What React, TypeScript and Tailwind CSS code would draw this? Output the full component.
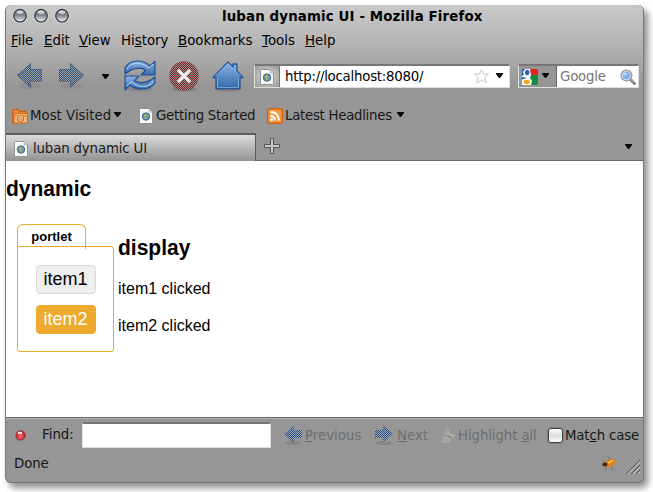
import React from "react";

const Caret = ({ className = "" }: { className?: string }) => (
  <svg className={"shrink-0 " + className} width="7" height="5" viewBox="0 0 7 5">
    <path d="M0 0H7V1L4 5H3L0 1Z" fill="#080808" />
  </svg>
);

const Orb = () => (
  <svg width="16" height="16" viewBox="0 0 16 16">
    <circle cx="8" cy="8" r="7.6" fill="#e2e2e2" />
    <circle cx="8" cy="7.8" r="6.3" fill="url(#orb)" stroke="#35383f" strokeWidth="1.3" />
    <ellipse cx="8" cy="4" rx="3.4" ry="1.8" fill="#fff" opacity=".65" />
  </svg>
);

const Defs = () => (
  <svg className="absolute" width="0" height="0">
    <defs>
      <linearGradient id="orb" x1="0" y1="0" x2="0" y2="1">
        <stop offset="0" stopColor="#777c85" />
        <stop offset=".45" stopColor="#7d838d" />
        <stop offset="1" stopColor="#f4f8fc" />
      </linearGradient>
      <linearGradient id="blue" x1="0" y1="0" x2="0" y2="1">
        <stop offset="0" stopColor="#8db4e2" />
        <stop offset="1" stopColor="#3269ae" />
      </linearGradient>
      <radialGradient id="red" cx=".5" cy=".6" r=".5">
        <stop offset="0" stopColor="#ff7777" />
        <stop offset="1" stopColor="#bd1621" />
      </radialGradient>
      <pattern id="dimBlue" width="2" height="2" patternUnits="userSpaceOnUse">
        <path d="M1 0h1v1H1zM0 1h1v1H0z" fill="#35547c" />
      </pattern>
      <pattern id="dimRed" width="2" height="2" patternUnits="userSpaceOnUse">
        <rect width="2" height="2" fill="#989090" />
        <path d="M0 0h1v1H0zM1 1h1v1H1z" fill="#7b2020" />
      </pattern>
      <pattern id="findBlue" width="2" height="2" patternUnits="userSpaceOnUse">
        <rect width="2" height="2" fill="#9aa5b4" />
        <path d="M0 0h1v1H0zM1 1h1v1H1z" fill="#2c4f7e" />
      </pattern>
    </defs>
  </svg>
);

const Arrow = ({ right = false }: { right?: boolean }) => (
  <svg width="27" height="28" viewBox="0 0 27 28">
    <ellipse cx="14" cy="24" rx="11" ry="3" fill="#777" opacity=".25" />
    <path
      d={right ? "M1 7H12V1L26 13L12 26V19H1Z" : "M26 7H15V1L1 13L15 26V19H26Z"}
      fill="url(#dimBlue)"
    />
    <path
      d={right ? "M1.500 7.500H12.500V2L25.500 13.500L12.500 25V19.500H1.500Z" : "M25.500 7.500H14.500V2L1.500 13.500L14.500 25V19.500H25.500Z"}
      fill="none" stroke="#33486a" strokeWidth="1" strokeDasharray="1 1"
    />
  </svg>
);

const SmallArrow = ({ right = false }: { right?: boolean }) => (
  <svg width="20" height="22" viewBox="0 0 20 22">
    <ellipse cx="10" cy="19" rx="8" ry="2" fill="#6e6e6e" opacity=".35" />
    <path
      d={right ? "M1 6H9V1L19 10L9 19V14H1Z" : "M19 6H11V1L1 10L11 19V14H19Z"}
      fill="url(#findBlue)"
    />
  </svg>
);

const Reload = () => (
  <svg width="32" height="32" viewBox="0 0 32 32">
    <ellipse cx="16" cy="29" rx="13" ry="2.5" fill="#555" opacity=".25" />
    <g fill="url(#blue)" stroke="#204f90" strokeWidth="1.2" strokeLinejoin="round">
      <path d="M1 14V8C4 3 8 1 13 1C19 1 23 3 26 6L31 1.500V15H17L21.500 10.500C18 7 9 7 1 14Z" />
      <path d="M31 17V23C28 27 24 29 19 29C13 29 9 28 6 25L1 30V16H15L10.500 20.500C14 24 23 24 31 17Z" />
    </g>
    <path d="M3 9C8 2 16 1 25 8L29 4M29 22C24 28 15 28 7 22L3 26" fill="none" stroke="#bad4f1" strokeWidth="1" />
    <path d="M8 6C6 8 6 9 7 10M24 20Q24 23 23 25" fill="none" stroke="#3e70b0" />
  </svg>
);

const Stop = () => (
  <svg width="30" height="32" viewBox="0 0 30 32">
    <ellipse cx="15" cy="29" rx="12" ry="2.500" fill="#555" opacity=".35" />
    <circle cx="15" cy="16" r="14.800" fill="url(#dimRed)" />
    <path d="M10 11L20 21M20 11L10 21" stroke="#eee" strokeWidth="3.200" strokeLinecap="square" />
  </svg>
);

const Home = () => (
  <svg width="32" height="31" viewBox="0 0 32 31">
    <ellipse cx="16" cy="28" rx="13" ry="2.500" fill="#555" opacity=".4" />
    <path d="M16 1L21 6V3H25V10L31 16.500H28V27.500H4V16.500H1Z" fill="url(#blue)" stroke="#245495" strokeWidth="1.300" strokeLinejoin="round" />
    <path d="M3.500 15L16 2.500L28.500 15M5.500 17V26.500H26.500V17" fill="none" stroke="#a2c4e8" opacity=".6" />
  </svg>
);

const Page = () => (
  <svg width="14" height="16" viewBox="0 0 14 16">
    <path d="M.5 1.500Q.5.500 1.500.500H10L13.500 4V14.500Q13.500 15.500 12.500 15.500H1.500Q.5 15.500.5 14.500Z" fill="#f8f8f6" stroke="#929292" />
    <path d="M10 1V4H13" fill="#d8d8d8" stroke="#aaa" strokeWidth=".6" />
    <circle cx="7" cy="8.500" r="3.700" fill="#5d90c0" stroke="#3f628e" />
    <path d="M4.500 7L7 5.500L8.500 6.500L7 8.500L8 10.500L6.500 11.500L5.500 9ZM8.500 7L10 8.500L9 10Z" fill="#a4b956" />
  </svg>
);

const PhotoFolder = () => (
  <svg width="16" height="16" viewBox="0 0 16 16">
    <path d="M.7 14.500V1.500H6L7 3.500H14.500V14.500Z" fill="#e98c43" stroke="#cc641a" strokeWidth="1.300" />
    <path d="M2 5.500H15.300V15H2Z" fill="#f5b97a" stroke="#cf671d" />
    <circle cx="8.500" cy="10.500" r="3" fill="#ffe0b8" stroke="#c86c29" strokeWidth="1.200" />
    <circle cx="8.500" cy="10.500" r="1.200" fill="none" stroke="#c86c29" />
    <path d="M3 7.500H5M11 7L13 8.500L14 8" stroke="#c86c29" fill="none" />
  </svg>
);

const Feed = () => (
  <svg width="16" height="16" viewBox="0 0 16 16">
    <rect x=".7" y=".7" width="14.600" height="14.600" rx="1.500" fill="#f39a3f" stroke="#d26013" strokeWidth="1.400" />
    <path d="M3.500 4Q11.500 4 12 12.500M3.500 8Q8 8 8 12.500" fill="none" stroke="#fff" strokeWidth="1.800" />
    <circle cx="4.500" cy="11.500" r="1.500" fill="#fff" />
  </svg>
);

const Google = () => (
  <svg width="16" height="16" viewBox="0 0 16 16">
    <rect width="16" height="16" rx="1" fill="#fff" />
    <path d="M8 0H15Q16 0 16 1V6H9Z" fill="#e42520" />
    <path d="M9 6H16V15Q16 16 15 16H9L10 12L8 9Z" fill="#168c40" />
    <path d="M0 0H3L1 3L2 6L0 7Z" fill="#2463b1" />
    <ellipse cx="5.200" cy="3.500" rx="2.200" ry="2.700" fill="#2463b1" />
    <ellipse cx="4.700" cy="13" rx="3.200" ry="2.200" fill="#eda51d" />
    <path d="M0 8Q5 8 4 9.500L1 10L0 11Z" fill="#2463b1" />
  </svg>
);

const Search = () => (
  <svg width="16" height="16" viewBox="0 0 16 16">
    <path d="M10 10L14.500 14.500" stroke="#777" strokeWidth="2.800" strokeLinecap="round" />
    <path d="M10.500 10L14 13.500" stroke="#ccc" strokeLinecap="round" />
    <circle cx="6.500" cy="6.500" r="5.300" fill="#7fb0e2" stroke="#999" strokeWidth="1.500" />
    <circle cx="6.500" cy="6.500" r="4.300" fill="none" stroke="#cfe3f8" />
    <ellipse cx="5" cy="5" rx="2" ry="1.500" fill="#b9daf3" />
  </svg>
);

const App = () => (
  <div className="h-[492px] w-[653px] overflow-hidden bg-white pl-[5px] pt-[5px] font-['DejaVu_Sans',sans-serif] text-[13.333px] leading-4 text-[#181818]">
    <Defs />
    <div className="flex h-[478px] w-[639px] flex-col overflow-hidden rounded-[6px] border-b border-l border-r border-[#777] bg-[#969696] shadow-[4px_5px_7px_rgba(0,0,0,0.45)]">
      <div className="flex h-24 shrink-0 flex-col bg-linear-to-b from-[#c7c7c7] from-5% via-[#b4b4b4] via-40% to-[#969696] to-85%">
        <div className="flex h-6 pl-[6px] pt-[3px]">
          <div className="flex gap-[5px]"><Orb /><Orb /><Orb /></div>
          <div className="ml-[152px] whitespace-nowrap pt-px font-bold tracking-[0.15px] text-black">luban dynamic UI - Mozilla Firefox</div>
        </div>
        <div className="flex h-[22px] items-center pl-[5px] pt-[2px] text-black">
          <span className="w-[33px]"><u>F</u>ile</span>
          <span className="w-[35px]"><u>E</u>dit</span>
          <span className="w-[42px]"><u>V</u>iew</span>
          <span className="w-[57px]">Hi<u>s</u>tory</span>
          <span className="w-[84px]"><u>B</u>ookmarks</span>
          <span className="w-[43px]"><u>T</u>ools</span>
          <span><u>H</u>elp</span>
        </div>
        <div className="flex h-[50px] items-center pl-[10px]">
          <Arrow />
          <div className="ml-[15px]"><Arrow right /></div>
          <Caret className="ml-[17px]" />
          <div className="ml-[15px] w-8"><Reload /></div>
          <div className="ml-[13px]"><Stop /></div>
          <div className="ml-[13px]"><Home /></div>
          <div className="ml-[10px] flex h-6 w-[256px] items-center border border-t-2 border-[#ddd] border-t-[#777] bg-white">
            <div className="flex h-full w-[25px] items-center justify-center border-r border-[#777] bg-radial from-[#ddd] to-[#999]"><Page /></div>
            <span className="ml-[5px] w-[188px] tracking-[-0.24px] text-black">http://localhost:8080/</span>
            <svg width="17" height="17" viewBox="0 0 17 17"><path d="M8.500 1.500L10.500 6H15.500L11.800 9.300L13.200 15L8.500 12L3.800 15L5.200 9.300L1.500 6H6.500Z" fill="#fff" stroke="#c7c7c7" /></svg>
            <Caret className="mb-[3px] ml-[6px]" />
          </div>
          <div className="ml-[8px] flex h-6 w-[121px] items-center border border-t-2 border-[#ddd] border-t-[#777] bg-white">
            <div className="flex h-full w-[38px] items-center border-r border-[#666] bg-[#969696] pl-[3px]"><Google /><Caret className="mb-[3px] ml-[4px]" /></div>
            <span className="ml-[3px] w-[60px] tracking-[-0.2px] text-[#777]">Google</span><Search />
          </div>
        </div>
      </div>
      <div className="flex h-[31px] shrink-0 items-center pb-[2px] pl-[6px]">
        <PhotoFolder /><span className="ml-[2px] w-[84px]">Most Visited</span><Caret className="mb-[3px]" />
        <div className="ml-[18px]"><Page /></div><span className="ml-[3px] w-[111px] whitespace-nowrap tracking-[-0.25px]">Getting Started</span>
        <Feed /><span className="ml-[2px] w-[112px] whitespace-nowrap tracking-[-0.28px]">Latest Headlines</span><Caret className="mb-[3px]" />
      </div>
      <div className="flex h-[29px] shrink-0 border-b border-[#666]">
        <div className="mt-px flex h-[28px] w-[250px] items-center border-r border-t-2 border-[#5b5b5b] bg-linear-to-b from-[#dcdcdc] to-[#939393] pl-[8px] pt-px">
          <Page /><span className="ml-[5px] tracking-[-0.15px]">luban dynamic UI</span>
        </div>
        <svg className="ml-[8px] mt-[6px]" width="16" height="16" viewBox="0 0 16 16"><path d="M6.500.5H9.500V6.500H15.500V9.500H9.500V15.500H6.500V9.500H.5V6.500H6.500Z" fill="#c8c8c8" stroke="#555" /></svg>
        <Caret className="ml-auto mr-[11px] mt-[12px]" />
      </div>
      <main className="h-[256px] shrink-0 bg-white font-['Liberation_Sans',Arial,sans-serif] text-base leading-5 text-black">
        <h2 className="h-[63px] pt-[16px] text-[21px] font-bold leading-6"><span className="inline-block origin-left scale-y-[1.07]">dynamic</span></h2>
        <div className="flex">
          <section className="ml-[11px] w-[97px]">
            <div className="h-[22px] w-[69px] rounded-t-[6px] border border-b-0 border-[#edaa2e] text-center text-[13px] font-bold leading-6">portlet</div>
            <div className="relative flex h-[106px] flex-col items-center gap-[11px] rounded-[3px] rounded-tl-none border border-[#edaa2e] pt-[18px] text-[18px]">
              <span className="absolute left-[67px] top-0 h-[2px] w-px bg-[#edaa2e]" />
              <button className="h-[29px] w-[60px] rounded-[4px] border border-[#d8d8d8] bg-[#eee] leading-[27px]">item1</button>
              <button className="h-[29px] w-[60px] rounded-[4px] border border-[#edaa2e] bg-[#edaa2e] leading-[27px] text-white">item2</button>
            </div>
          </section>
          <section className="ml-[4px] pt-[12px]">
            <h2 className="text-[21px] font-bold leading-6"><span className="inline-block origin-left scale-y-[1.07]">display</span></h2>
            <p className="mt-[19px]">item1 clicked</p><p className="mt-[17px]">item2 clicked</p>
          </section>
        </div>
      </main>
      <div className="flex h-[35px] shrink-0 items-center border-t border-[#666] pl-[9px] text-[#6f6f6f] shadow-[inset_0_1px_#b5b5b5]">
        <svg width="11" height="11" viewBox="0 0 11 11"><circle cx="5.500" cy="5.500" r="4.800" fill="url(#red)" stroke="#7a3d3d" strokeWidth=".6" /><ellipse cx="5" cy="3" rx="2.500" ry="1.200" fill="#ffd6d6" /></svg>
        <span className="ml-[16px] w-[40px] text-[#181818]">Find:</span>
        <div className="h-[26px] w-[189px] border border-t-2 border-[#ddd] border-t-[#777] bg-white" />
        <div className="ml-[12px]"><SmallArrow /></div><span className="ml-[2px] w-[69px] pt-px"><u>P</u>revious</span>
        <SmallArrow right /><span className="ml-[3px] w-[43px] pt-px"><u>N</u>ext</span>
        <svg width="17" height="17" viewBox="0 0 17 17"><path d="M5 3L8 1L11 6L15 9L10 15H1L3 10Z" fill="#a4a4a2" /><path d="M5 8L9 12M8 6L11 8L15 9M2 15H10" stroke="#b5b4af" fill="none" /><path d="M4 8L12 11" stroke="#808080" /></svg>
        <span className="ml-px w-[89px] whitespace-nowrap pt-px tracking-[-0.1px]">Highlight <u>a</u>ll</span>
        <span className="ml-px h-[15px] w-[15px] rounded-[3px] border border-[#444] bg-linear-to-b from-white via-[#ddd] to-white shadow-[0_0_0_0.5px_#666]" />
        <span className="ml-[2px] whitespace-nowrap pt-px tracking-[-0.15px] text-[#181818]">Mat<u>c</u>h case</span>
      </div>
      <div className="flex h-[30px] shrink-0 pl-[8px] pt-[3px]">
        <span className="pt-px tracking-[-0.1px]">Done</span>
        <svg className="ml-auto mr-[9px] mt-[2px]" width="16" height="15" viewBox="0 0 16 15"><path d="M2 4L5 6M1 8H5M4 12L6 9M10 10L12 13M9 2L7 0" stroke="#604b38" strokeWidth=".7" /><ellipse cx="9" cy="6" rx="6" ry="3.500" transform="rotate(-25 9 6)" fill="#de821b" /><path d="M7 6L12 3.500" stroke="#ffd66b" strokeWidth="1.200" /><ellipse cx="4" cy="7.500" rx="2.500" ry="2" fill="#55240c" /></svg>
        <svg className="mr-[3px] mt-[5px]" width="14" height="14" viewBox="0 0 14 14"><path d="M0 14L14 0M5 14L14 5M10 14L14 10" stroke="#555" /><path d="M2 14L14 2M7 14L14 7M12 14L14 12" stroke="#c2c2c2" /></svg>
      </div>
    </div>
  </div>
);

export default App;
